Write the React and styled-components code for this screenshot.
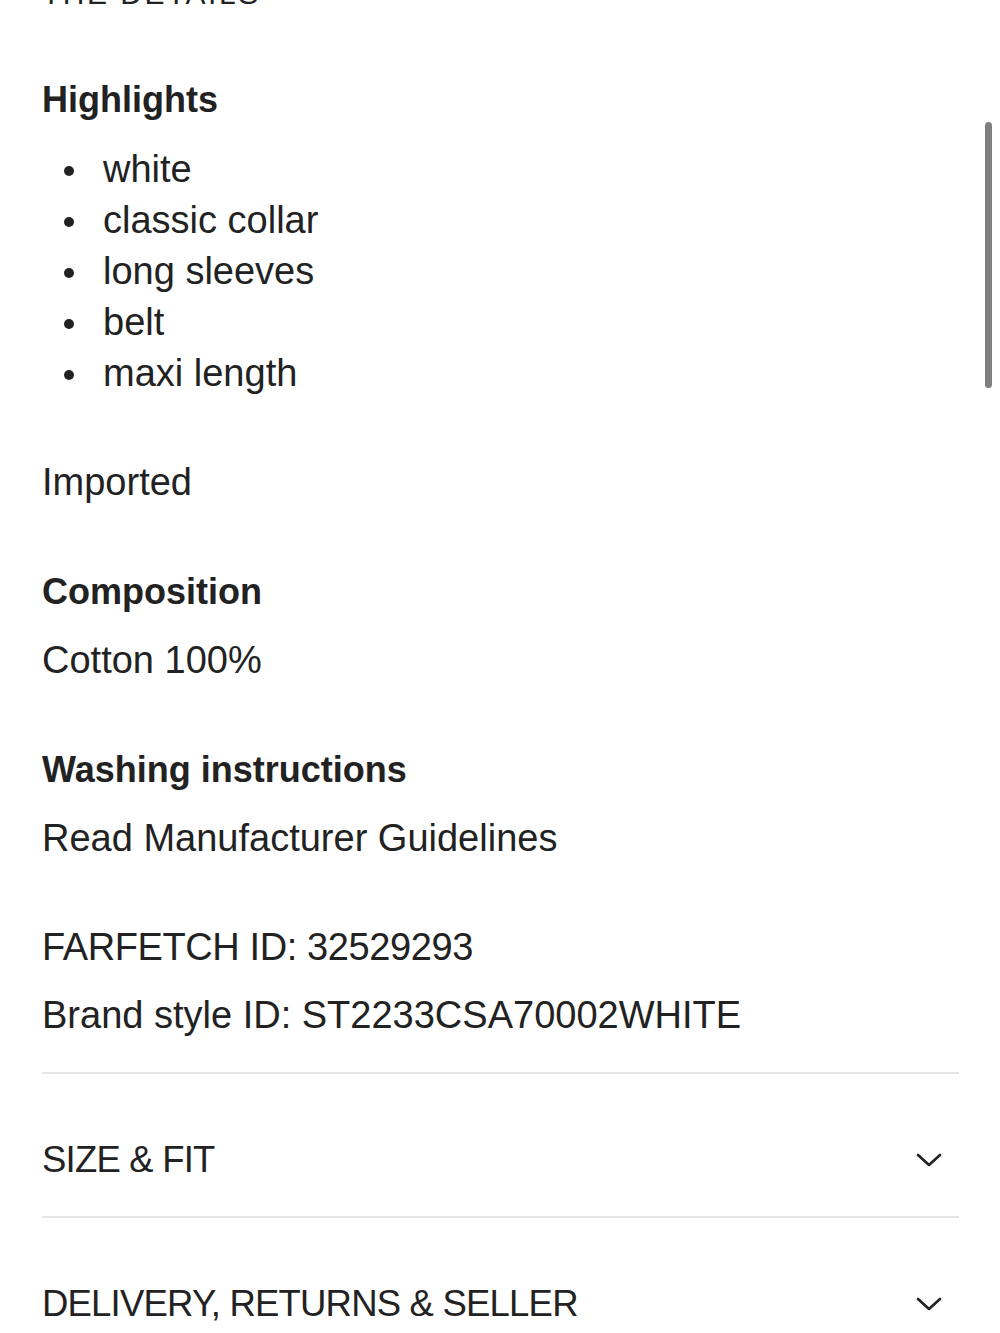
import React from 'react';
import styled, { createGlobalStyle } from 'styled-components';

const Global = createGlobalStyle`
body {
  margin: 0;
  background: #fff;
  font-family: "Liberation Sans", Arial, sans-serif;
  color: #222;
}
`

const Page = styled.div`
display: flex;
flex-direction: column;
padding: 0 41px 0 42px;
margin-top: -32px;
`

const Title = styled.h2`
margin: 0 0 55px 0;
font-size: 30px;
line-height: 51px;
font-weight: 400;
letter-spacing: 2.5px;
text-transform: uppercase;
`

const Details = styled.div`
display: flex;
flex-direction: column;
gap: 58px;
`

const Section = styled.div`
display: flex;
flex-direction: column;
gap: ${props => props.gap || 18}px;
`

const Heading = styled.h3`
margin: 0;
font-size: 36px;
line-height: 51px;
font-weight: 700;
`

const Text = styled.p`
margin: 0;
font-size: 38px;
line-height: 51px;
letter-spacing: ${props => props.tight ? '-0.4px' : '0'};
`

const List = styled.ul`
margin: 0;
padding: 0;
list-style: none;
`

const Item = styled.li`
display: flex;
align-items: center;
font-size: 38px;
line-height: 51px;

&::before {
  content: "";
  width: 10px;
  height: 10px;
  border-radius: 50%;
  background: #222;
  margin: 2px 29px 0 22px;
}
`

const Accordion = styled.div`
margin-top: 31px;
border-top: 2px solid #e6e6e6;
`

const Row = styled.div`
display: flex;
align-items: center;
justify-content: space-between;
padding: 60px 0 31px;
border-bottom: ${props => props.last ? 'none' : '2px solid #e6e6e6'};
`

const RowLabel = styled.span`
font-size: 36.5px;
line-height: 51px;
letter-spacing: -0.8px;
text-transform: uppercase;
`

const Chevron = styled.svg`
width: 26px;
height: 14px;
margin-right: 17px;
`

const Scrollbar = styled.div`
position: fixed;
top: 122px;
right: 8px;
width: 7px;
height: 266px;
border-radius: 4px;
background: #808080;
`

const highlights = ['white', 'classic collar', 'long sleeves', 'belt', 'maxi length']

function Arrow () {
    return (
        <Chevron viewBox="0 0 26 14" fill="none">
            <path d="M2 2 L13 12 L24 2" stroke="#222" strokeWidth="2.6" strokeLinecap="round" strokeLinejoin="round" />
        </Chevron>
    )
}

function App () {
    return (
        <>
            <Global />
            <Page>
                <Title>The details</Title>
                <Details>
                    <Section gap={19}>
                        <Heading>Highlights</Heading>
                        <List>
                            { highlights.map(h => <Item key={h}>{ h }</Item>) }
                        </List>
                    </Section>
                    <Section>
                        <Text>Imported</Text>
                    </Section>
                    <Section>
                        <Heading>Composition</Heading>
                        <Text>Cotton 100%</Text>
                    </Section>
                    <Section>
                        <Heading>Washing instructions</Heading>
                        <Text>Read Manufacturer Guidelines</Text>
                    </Section>
                    <Section gap={17}>
                        <Text tight>FARFETCH ID: 32529293</Text>
                        <Text>Brand style ID: ST2233CSA70002WHITE</Text>
                    </Section>
                </Details>
                <Accordion>
                    <Row>
                        <RowLabel>Size &amp; Fit</RowLabel>
                        <Arrow />
                    </Row>
                    <Row last>
                        <RowLabel>Delivery, Returns &amp; Seller</RowLabel>
                        <Arrow />
                    </Row>
                </Accordion>
            </Page>
            <Scrollbar />
        </>
    )
}

export default App;
